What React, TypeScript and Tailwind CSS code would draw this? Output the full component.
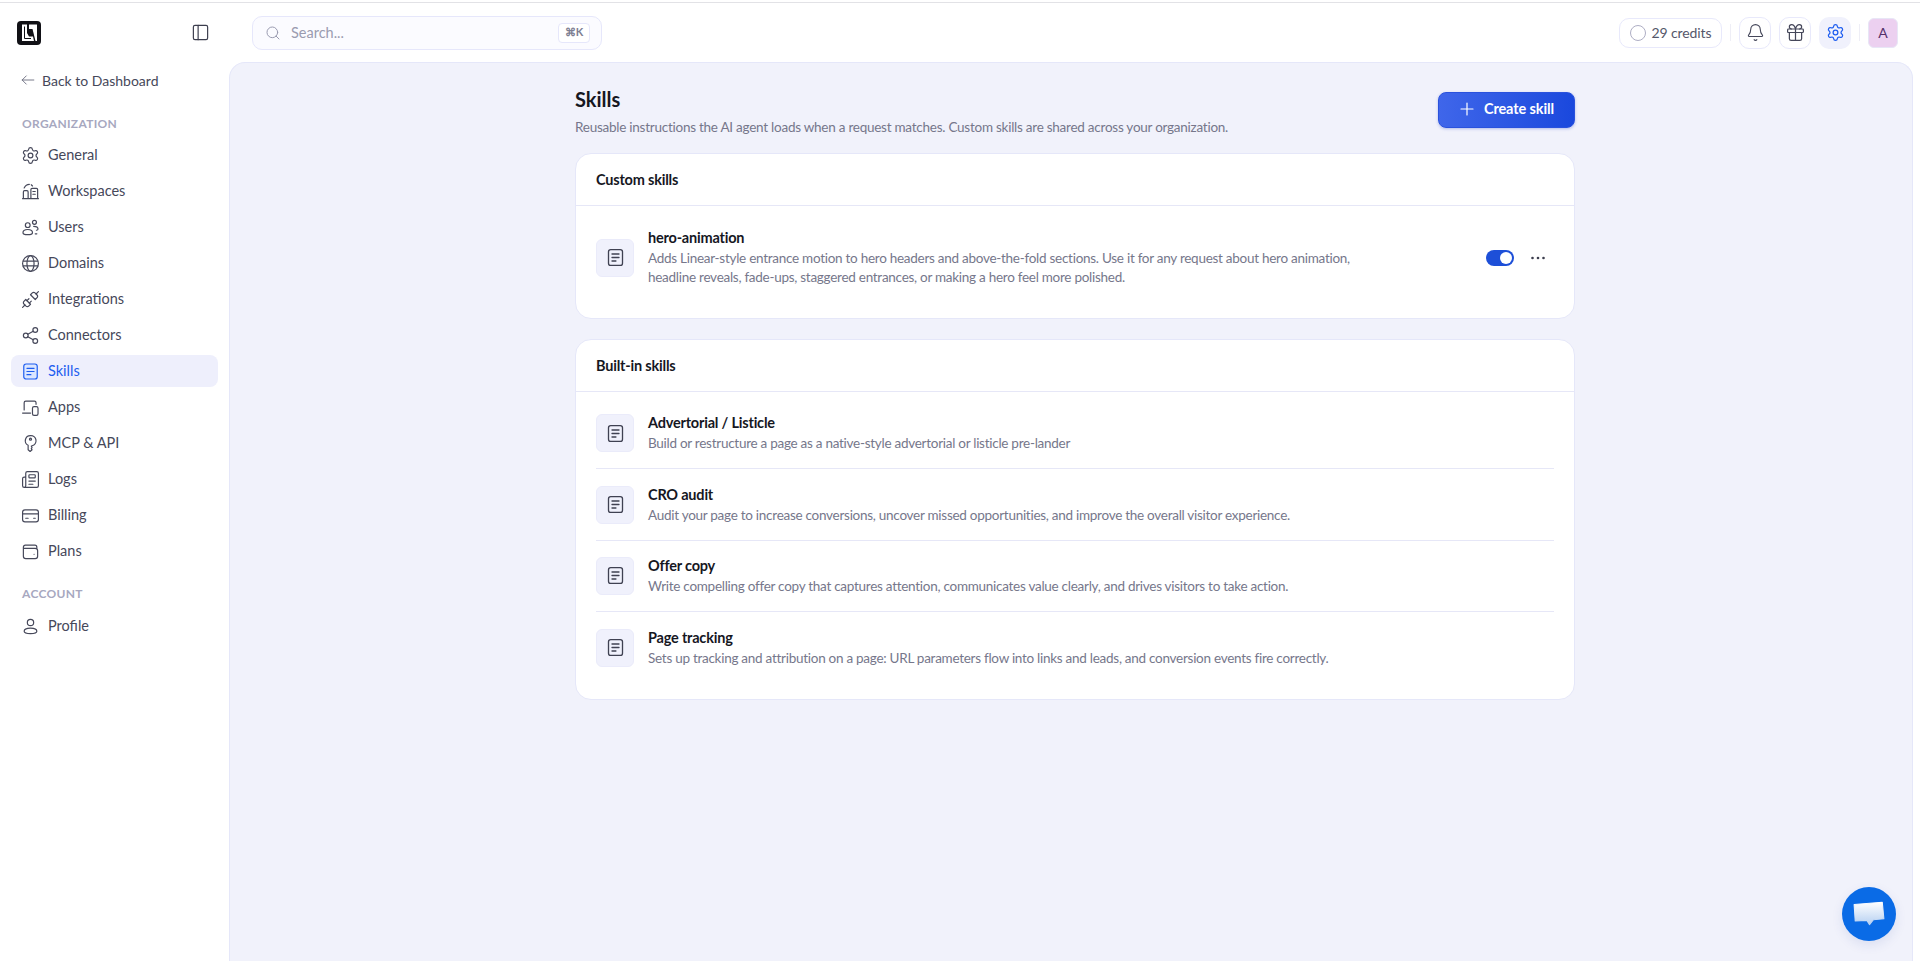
import React from "react";
import { Settings, Unplug, Newspaper, Bell, Gift, Share2, PanelLeft } from "lucide-react";

const s = { fill: "none", stroke: "currentColor", strokeWidth: 1.5, strokeLinecap: "round", strokeLinejoin: "round" } as const;

function Ic({ size = 19, children, className = "" }: { size?: number; children: React.ReactNode; className?: string }) {
  return (
    <svg width={size} height={size} viewBox="0 0 24 24" {...s} className={className}>
      {children}
    </svg>
  );
}

const Doc = () => (
  <Ic size={21}>
    <rect x="4" y="3" width="16" height="18" rx="2.5" />
    <path d="M8 8h8M8 12h8M8 16h4.500" />
  </Ic>
);

const L = { size: 19, strokeWidth: 1.5 };

const icons: Record<string, React.ReactNode> = {
  General: <Settings {...L} />,
  Workspaces: (
    <Ic>
      <path d="M3 21V12.500a1.500 1.500 0 0 1 1.500-1.500h3A1.500 1.500 0 0 1 9 12.500V21zM12.500 21V9.500A1.500 1.500 0 0 1 14 8h5.500A1.500 1.500 0 0 1 21 9.500V21zM15 12h3M15 15.500h3M4 7.500C5.500 4.500 8 3 10.500 3M13 3.500l1.500 1.500M2 21h20" />
    </Ic>
  ),
  Users: (
    <Ic>
      <circle cx="8.500" cy="9" r="3" />
      <circle cx="17" cy="5.500" r="2.500" />
      <path d="M2.500 18.500c0-2.500 2.500-4 6-4s6 1.500 6 4-2.500 2.500-6 2.500-6 0-6-2.500zM16 10.500c3 0 5.500 1.500 5.500 3.500 0 1-1 1.500-2 1.500M18 20h2" />
    </Ic>
  ),
  Domains: (
    <Ic>
      <circle cx="12" cy="12" r="10" />
      <ellipse cx="12" cy="12" rx="4.500" ry="10" />
      <path d="M2.800 9h18.400M2.800 15h18.400" />
    </Ic>
  ),
  Integrations: <Unplug {...L} />,
  Connectors: <Share2 {...L} />,
  Apps: (
    <Ic>
      <path d="M4 15V6a2 2 0 0 1 2-2h11a2 2 0 0 1 2 2v2M2 19h10" />
      <rect x="14.500" y="11" width="7" height="11" rx="2" />
    </Ic>
  ),
  "MCP & API": (
    <Ic>
      <path d="M12 2a6.500 6.500 0 0 0-3 12.300V20l2.500 2 2.500-2-1-1.500 1-1.500-1-1.500 1-.700A6.500 6.500 0 0 0 12 2z" />
      <circle cx="12" cy="6.500" r="1.300" />
    </Ic>
  ),
  Logs: <Newspaper {...L} />,
  Billing: (
    <Ic>
      <rect x="2" y="5" width="20" height="15" rx="3" />
      <path d="M2 10h20M6 15.500h3M16 15.500h2" />
    </Ic>
  ),
  Plans: (
    <Ic>
      <path d="M3 8V6.500A2.500 2.500 0 0 1 5.500 4h12A2.500 2.500 0 0 1 20 6.500V8M3 8v10a3 3 0 0 0 3 3h12a3 3 0 0 0 3-3v-7a3 3 0 0 0-3-3zM16.500 15.500h.01" />
    </Ic>
  ),
  Profile: (
    <Ic>
      <circle cx="12" cy="7" r="4" />
      <path d="M12 14c-5 0-8 1.500-8 4s3 3 8 3 8-.5 8-3-3-4-8-4z" />
    </Ic>
  ),
  Skills: (
    <Ic>
      <rect x="3.500" y="2.500" width="17" height="19" rx="3" fill="#dbe6ff" />
      <path d="M7.500 8h9M7.500 12h9M7.500 16h5" />
    </Ic>
  ),
};

const nav1 = ["General", "Workspaces", "Users", "Domains", "Integrations", "Connectors", "Skills", "Apps", "MCP & API", "Logs", "Billing", "Plans"];

function NavItem({ label }: { label: string }) {
  const active = label === "Skills";
  return (
    <div
      className={
        active
          ? "flex h-8 items-center gap-[8px] rounded-lg bg-[#eeeffc] px-[10px] text-[#1d5df0]"
          : "flex h-8 items-center gap-[8px] rounded-lg px-[10px] text-[#46485a]"
      }
    >
      {icons[label]}
      <span className="text-[14.500px]">{label}</span>
    </div>
  );
}

function IconBox() {
  return (
    <div className="flex h-[38px] w-[38px] shrink-0 items-center justify-center rounded-md border border-[#eaebfa] bg-[#f0f1fc] text-[#3f4152]">
      <Doc />
    </div>
  );
}

const builtin = [
  ["Advertorial / Listicle", "Build or restructure a page as a native-style advertorial or listicle pre-lander"],
  ["CRO audit", "Audit your page to increase conversions, uncover missed opportunities, and improve the overall visitor experience."],
  ["Offer copy", "Write compelling offer copy that captures attention, communicates value clearly, and drives visitors to take action."],
  ["Page tracking", "Sets up tracking and attribution on a page: URL parameters flow into links and leads, and conversion events fire correctly."],
];

function CardHead({ title }: { title: string }) {
  return (
    <div className="flex h-[52px] items-center border-b border-[#e6e7f7] px-[20px] text-[14.500px] font-bold tracking-[-0.2px] text-[#16171f]">{title}</div>
  );
}

function HeadBtn({ children, active }: { children: React.ReactNode; active?: boolean }) {
  return (
    <div
      className={
        active
          ? "flex h-8 w-8 items-center justify-center rounded-[10px] bg-[#f0f1fc] text-[#1d5df0]"
          : "flex h-8 w-8 items-center justify-center rounded-[10px] border border-[#e8e9fb] text-[#45475a]"
      }
    >
      {children}
    </div>
  );
}

export default function App() {
  return (
    <div className="flex h-[961px] w-[1920px] flex-col overflow-hidden bg-white font-['Lato',sans-serif]">
      <div className="mt-[2px] h-px shrink-0 bg-[#e2e2e6]" />
      <header className="flex h-[59px] shrink-0 items-center">
        <div className="flex w-[252px] shrink-0 items-center justify-between pl-[17px] pr-[42px]">
          <svg width="24" height="24" viewBox="0 0 24 24">
            <rect width="24" height="24" rx="4" fill="#111116" />
            <path d="M5 3.500h5v8.500l2 3.500h4l1 4.500H5zM12 3.500h8V20h-1.500L15.500 8H12z" fill="#fff" />
            <path d="M7.500 5.500v12h6.500" fill="none" stroke="#111116" strokeWidth="1" />
          </svg>
          <PanelLeft size={19} strokeWidth={1.5} className="text-[#3c3e4e]" />
        </div>
        <div className="flex h-[34px] w-[350px] items-center rounded-[10px] border border-[#e6e7fb] bg-[#fbfbff] pl-3 pr-[11px]">
          <svg width="16" height="16" viewBox="0 0 24 24" {...s} className="text-[#9a9bb0]">
            <circle cx="11" cy="11" r="8" />
            <path d="m21 21-4.300-4.300" />
          </svg>
          <span className="ml-[10px] flex-1 text-[14.500px] text-[#9a9bb0]">Search...</span>
          <div className="flex h-5 w-8 items-center justify-center rounded border border-[#e6e7fb] bg-white text-[11px] font-bold text-[#7d7e92]">⌘K</div>
        </div>
        <div className="ml-auto flex items-center pr-[22px]">
          <div className="flex h-[30px] w-[103px] items-center justify-center gap-[6px] rounded-[10px] border border-[#e8e9fb] text-[14px] tracking-[-0.1px] text-[#55576a]">
            <div className="h-4 w-4 rounded-full border-[1.500px] border-[#aeaec4]" />
            <span>29 credits</span>
          </div>
          <div className="mx-2 h-[17px] w-px bg-[#eeeef6]" />
          <div className="flex gap-2">
            <HeadBtn>
              <Bell size={19} strokeWidth={1.4} />
            </HeadBtn>
            <HeadBtn>
              <Gift size={21} strokeWidth={1.4} />
            </HeadBtn>
            <HeadBtn active>
              <Settings size={19} strokeWidth={1.6} />
            </HeadBtn>
          </div>
          <div className="mx-2 h-[17px] w-px bg-[#eeeef6]" />
          <div className="flex h-[30px] w-[30px] items-center justify-center rounded-md border border-[#e8e6f6] bg-[#ecd0f0] text-[14px] text-[#54306a]">A</div>
        </div>
      </header>
      <div className="flex min-h-0 flex-1">
        <aside className="w-[229px] shrink-0 px-[11px] pt-[7px]">
          <div className="flex h-[22px] items-center gap-[7px] pl-[10px] text-[14px] text-[#46485a]">
            <svg width="14" height="14" viewBox="0 0 24 24" {...s} className="text-[#66687a]">
              <path d="M22 12H2M9 5l-7 7 7 7" />
            </svg>
            Back to Dashboard
          </div>
          <div className="mt-[24px] pl-[11px] text-[12px] font-bold leading-[18px] tracking-[0.3px] text-[#a7a8bf]">ORGANIZATION</div>
          <nav className="mt-[6px] flex flex-col gap-1">
            {nav1.map((l) => (
              <NavItem key={l} label={l} />
            ))}
          </nav>
          <div className="mt-[18px] pl-[11px] text-[12px] font-bold leading-[18px] tracking-[0.3px] text-[#a7a8bf]">ACCOUNT</div>
          <div className="mt-[7px]">
            <NavItem label="Profile" />
          </div>
        </aside>
        <main className="relative mr-[7px] flex-1 rounded-t-2xl border-x border-t border-[#e5e7f9] bg-[#f1f2fb]">
          <div className="ml-[345px] w-[1000px]">
            <div className="flex h-[90px] items-start justify-between pt-[22px]">
              <div>
                <h1 className="text-[20px] font-bold leading-[28px] text-[#16171f]">Skills</h1>
                <p className="mt-[4px] text-[13.500px] leading-[20px] tracking-[-0.25px] text-[#76778b]">
                  Reusable instructions the AI agent loads when a request matches. Custom skills are shared across your organization.
                </p>
              </div>
              <div className="mt-[7px] flex h-9 w-[137px] items-center justify-center gap-[9px] rounded-lg border border-[#2a52dd] bg-gradient-to-r from-[#3f66ea] to-[#1a48dd] pb-[2px] text-[14.500px] font-bold tracking-[-0.1px] text-white shadow-[0_1px_3px_rgba(30,60,200,0.3)]">
                <svg width="16" height="16" viewBox="0 0 24 24" {...s} strokeWidth={1.8}>
                  <path d="M12 3v18M3 12h18" />
                </svg>
                Create skill
              </div>
            </div>
            <section className="h-[166px] overflow-hidden rounded-2xl border border-[#e5e7f9] bg-white">
              <CardHead title="Custom skills" />
              <div className="flex items-center px-[20px] pt-[22px]">
                <IconBox />
                <div className="ml-[14px] w-[730px]">
                  <div className="text-[14.500px] font-bold leading-[19px] tracking-[-0.2px] text-[#16171f]">hero-animation</div>
                  <div className="mt-[2px] text-[13.500px] leading-[19px] tracking-[-0.27px] text-[#76778b]">
                    Adds Linear-style entrance motion to hero headers and above-the-fold sections. Use it for any request about hero animation, headline reveals, fade-ups, staggered entrances, or making a hero feel more polished.
                  </div>
                </div>
                <div className="ml-auto flex items-center pr-[8px]">
                  <div className="flex h-4 w-7 items-center justify-end rounded-full bg-[#1d4fd8] pr-[2px]">
                    <div className="h-3 w-3 rounded-full bg-white" />
                  </div>
                  <svg width="16" height="16" viewBox="0 0 16 16" fill="#3c3e4e" className="ml-4">
                    <circle cx="2.500" cy="8" r="1.300" />
                    <circle cx="8" cy="8" r="1.300" />
                    <circle cx="13.500" cy="8" r="1.300" />
                  </svg>
                </div>
              </div>
            </section>
            <section className="mt-[20px] h-[361px] overflow-hidden rounded-2xl border border-[#e5e7f9] bg-white">
              <CardHead title="Built-in skills" />
              <div className="px-[20px] pt-[6px]">
                {builtin.map(([t, d], i) => (
                  <div
                    key={t}
                    className={
                      i < 3
                        ? "flex h-[71.400px] items-center border-b border-[#e6e7f7]"
                        : "flex h-[71.400px] items-center"
                    }
                  >
                    <IconBox />
                    <div className="ml-[14px]">
                      <div className="text-[14.500px] font-bold leading-[19px] tracking-[-0.2px] text-[#16171f]">{t}</div>
                      <div className="mt-[2px] text-[13.500px] leading-[19px] tracking-[-0.27px] text-[#76778b]">{d}</div>
                    </div>
                  </div>
                ))}
              </div>
            </section>
          </div>
          <div className="absolute bottom-[20px] right-[16px] flex h-[54px] w-[54px] items-center justify-center rounded-full bg-[#0a6be6] shadow-[0_4px_12px_rgba(30,60,160,0.1)]">
            <svg width="34" height="30" viewBox="0 0 32 28">
              <defs>
                <linearGradient id="chat" x1="0" y1="0" x2="0" y2="1">
                  <stop offset="0" stopColor="#ffffff" />
                  <stop offset="1" stopColor="#b6d0f2" />
                </linearGradient>
              </defs>
              <path d="M2 5 28.500 3 30 18.500 20 19.500 16.500 24 14 20 3 20.500z" fill="url(#chat)" stroke="url(#chat)" strokeLinejoin="round" />
            </svg>
          </div>
        </main>
      </div>
    </div>
  );
}
